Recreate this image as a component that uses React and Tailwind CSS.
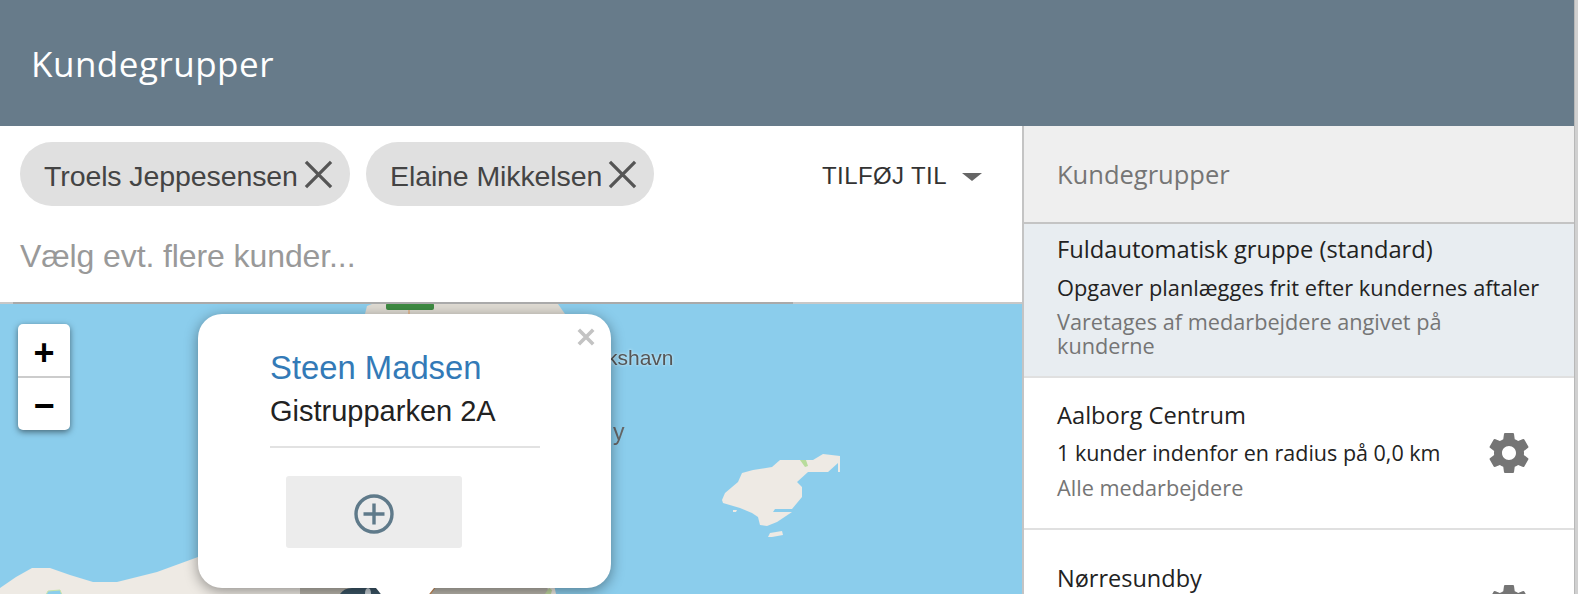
import React from "react";

function CloseX({ className }) {
  return (
    <svg viewBox="0 0 30 30" className={className} fill="none" stroke="#555555" strokeWidth="3.4">
      <path d="M2 2 L28 28 M28 2 L2 28" />
    </svg>
  );
}

function Chip({ name, className }) {
  return (
    <div className={"flex items-center h-16 rounded-[32px] bg-[#e0e0e0] pl-6 " + className}>
      <span className="text-[28.5px] leading-none text-[#444444] tracking-[-0.1px] whitespace-nowrap mt-[5px]">{name}</span>
      <CloseX className="w-[29px] h-[29px] ml-[6px]" />
    </div>
  );
}

function Gear({ className }) {
  return (
    <svg viewBox="0 0 24 24" className={className} fill="#757575">
      <path d="M19.43 12.98c.04-.32.07-.64.07-.98s-.03-.66-.07-.98l2.11-1.65c.19-.15.24-.42.12-.64l-2-3.46c-.12-.22-.39-.3-.61-.22l-2.49 1c-.52-.4-1.08-.73-1.69-.98l-.38-2.65C14.46 2.18 14.25 2 14 2h-4c-.25 0-.46.18-.49.42l-.38 2.65c-.61.25-1.17.59-1.69.98l-2.49-1c-.23-.09-.49 0-.61.22l-2 3.46c-.13.22-.07.49.12.64l2.11 1.65c-.04.32-.07.65-.07.98s.03.66.07.98l-2.11 1.65c-.19.15-.24.42-.12.64l2 3.46c.12.22.39.3.61.22l2.49-1c.52.4 1.08.73 1.69.98l.38 2.65c.03.24.24.42.49.42h4c.25 0 .46-.18.49-.42l.38-2.65c.61-.25 1.17-.59 1.69-.98l2.49 1c.23.09.49 0 .61-.22l2-3.46c.12-.22.07-.49-.12-.64l-2.11-1.65zM12 15.5c-1.93 0-3.5-1.57-3.5-3.5s1.57-3.5 3.5-3.5 3.5 1.57 3.5 3.5-1.57 3.5-3.5 3.5z" />
    </svg>
  );
}

function MapArt() {
  return (
    <svg viewBox="0 304 1022 290" className="absolute inset-0 w-full h-full">
      <defs>
        <filter id="soft"><feGaussianBlur stdDeviation="0.6" /></filter>
      </defs>
      <rect x="0" y="304" width="1022" height="290" fill="#8bcdec" />
      <g filter="url(#soft)">
        <path d="M0 588 L16 577 L32 568 L50 568 L70 575 L93 582 L117 582 L157 572 L198 557 L240 540 L300 540 L500 560 L552 575 L556 594 L0 594 Z" fill="#eeeae4" />
        <path d="M46 595 L48 591 L60 590 L62 595 Z" fill="#8bcdec" stroke="#c8e4a8" strokeWidth="1" />
        <path d="M300 560 H540 L548 590 L550 594 H300 Z" fill="#b9b5ac" />
        <path d="M365 314 L367 306 L372 304 H558 L565 314 Z" fill="#dfdbd3" />
        <rect x="386" y="303" width="48" height="7" rx="2" fill="#3c8a42" />
        <path d="M409 310 V314" stroke="#e8a060" strokeWidth="1" />
        <path d="M340 594 Q344 588 352 588 H376 Q384 590 386 594 Z" fill="#3b5566" />
        <path d="M365 594 Q365 588 368 588 Q371 588 371 594 Z" fill="#c9d2d8" />
        <path d="M427 594 L433 587 L436 587 L431 594 Z" fill="#c98a55" />
        <path d="M545 594 L549 588 L552 590 L551 594 Z" fill="#bfd8a0" />
        <path d="M722 500 L725 493 L738 482 L742 473 L753 470 L772 467 L780 460 L813 460 L823 454 L840 456 L840 472 L838 472 L838 463 L828 472 L808 472 L797 482 L802 487 L802 497 L792 509 L775 509 L773 512 L792 512 L777 522 L767 526 L760 525 L758 517 L752 513 L740 508 L723 503 Z" fill="#eeeae4" />
        <path d="M768 537 L770 533 L782 531 L783 535 L772 537 Z" fill="#eeeae4" />
        <path d="M733 510 L737 510 L736 512 L733 512 Z" fill="#eeeae4" />
        <path d="M800 460 L806 460 L808 466 L805 467 Z" fill="#b8dc9c" />
      </g>
    </svg>
  );
}

export default function App() {
  const sans = "font-['Liberation_Sans',Arial,sans-serif]";
  const side = "font-['Open_Sans',sans-serif]";
  return (
    <div className={"flex w-[1578px] h-[594px] overflow-hidden bg-white " + sans}>
      <div className="flex flex-col w-[1574px] h-full">
        <header className="flex items-center h-[126px] shrink-0 bg-[#677b8a] pl-[31px]">
          <h1 className={"text-[35px] leading-none text-white tracking-[0.5px] mt-px " + side}>Kundegrupper</h1>
        </header>

        <div className="flex flex-1 min-h-0">
          <div className="flex flex-col w-[1022px] shrink-0">
            <section className="relative flex flex-col h-[178px] shrink-0 pl-5 pt-4">
              <div className="flex gap-4">
                <Chip name="Troels Jeppesensen" className="w-[330px]" />
                <Chip name="Elaine Mikkelsen" className="w-[288px]" />
                <div className="flex items-center ml-[152px] text-[24px] tracking-[0.4px] text-[#333333] whitespace-nowrap">
                  <span className="mt-[3px]">TILFØJ TIL</span>
                  <span className="ml-[15px] mt-[6px] w-0 h-0 border-x-[10px] border-x-transparent border-t-[8px] border-t-[#666666]" />
                </div>
              </div>
              <div className="mt-[34px] text-[32px] leading-none text-[#999999] tracking-[-0.1px]">Vælg evt. flere kunder...</div>
              <div className="absolute left-0 right-0 bottom-0 h-[2px] bg-[#c8c8c8]">
                <div className="ml-[13px] w-[780px] h-full bg-[#aaaaaa]" />
              </div>
            </section>

            <section className="relative flex-1 overflow-hidden">
              <MapArt />
              <span className="absolute left-[607px] top-[43px] text-[21px] leading-none text-[#555555] blur-[0.7px] [text-shadow:0_0_3px_#e6f4fb]">kshavn</span>
              <span className="absolute left-[613px] top-[117px] text-[23px] leading-none text-[#666666] blur-[0.7px]">y</span>

              <div className="absolute left-[18px] top-5 w-[52px] h-[106px] flex flex-col rounded-[5px] bg-white shadow-[0_2px_6px_rgba(0,0,0,0.5)]">
                <div className="flex items-center justify-center h-[54px] pt-[5px] border-b-2 border-[#cccccc] text-[36px] font-bold leading-none text-black">+</div>
                <div className="flex items-center justify-center flex-1 pt-[3px] text-[36px] font-bold leading-none text-black">−</div>
              </div>

              <div className="absolute left-[198px] top-[10px] w-[413px] h-[274px] rounded-[24px] bg-white shadow-[0_3px_14px_rgba(0,0,0,0.4)] pl-[72px] pt-[36px]">
                <svg viewBox="0 0 20 20" className="absolute right-[16px] top-[14px] w-[18px] h-[18px]" fill="none" stroke="#c3c3c3" strokeWidth="4">
                  <path d="M2 2 L18 18 M18 2 L2 18" />
                </svg>
                <div className="text-[32.8px] leading-[36px] text-[#337ab7]">Steen Madsen</div>
                <div className="text-[29px] leading-[32px] text-[#222222] mt-[9px]">Gistrupparken 2A</div>
                <div className="w-[270px] h-[2px] bg-[#e2e2e2] mt-[19px]" />
                <div className="flex items-center justify-center ml-4 mt-[28px] w-[176px] h-[72px] rounded-[3px] bg-[#ececec]">
                  <svg viewBox="0 0 40 40" className="w-10 h-10 mt-[3px]" fill="none" stroke="#5f7a8a">
                    <circle cx="20" cy="20" r="18" strokeWidth="3.4" />
                    <path d="M20 9.5 V30.5 M9.5 20 H30.5" strokeWidth="3.4" />
                  </svg>
                </div>
              </div>
              <div className="absolute left-[376px] top-[284px] w-0 h-0 border-x-[29px] border-x-transparent border-t-[36px] border-t-white" />
            </section>
          </div>

          <aside className={"flex flex-col flex-1 min-w-0 border-l-2 border-[#c4c4c4] " + side}>
            <div className="flex items-center h-[98px] shrink-0 bg-[#efefef] border-b-2 border-[#c4c4c4] pl-[33px]">
              <span className="text-[25.5px] leading-none text-[#757575] mt-[2px]">Kundegrupper</span>
            </div>
            <div className="h-[154px] shrink-0 bg-[#e8edf1] border-b-2 border-[#e0e0e0] pl-[33px] pt-[10px]">
              <div className="text-[23.7px] leading-[30px] text-[#222222] whitespace-nowrap">Fuldautomatisk gruppe (standard)</div>
              <div className="text-[21.8px] leading-[30px] text-[#222222] mt-[9px] whitespace-nowrap">Opgaver planlægges frit efter kundernes aftaler</div>
              <div className="text-[21.7px] leading-[24px] text-[#757575] mt-[7px] w-[430px]">Varetages af medarbejdere angivet på kunderne</div>
            </div>
            <div className="flex items-center h-[152px] shrink-0 border-b-2 border-[#e0e0e0] pl-[33px] pr-[41px]">
              <div className="flex-1 min-w-0 -mt-1">
                <div className="text-[23.7px] leading-[30px] text-[#222222]">Aalborg Centrum</div>
                <div className="text-[21.5px] leading-[30px] text-[#222222] mt-2 whitespace-nowrap">1 kunder indenfor en radius på 0,0 km</div>
                <div className="text-[21.7px] leading-[30px] text-[#757575] mt-[5px]">Alle medarbejdere</div>
              </div>
              <Gear className="w-12 h-12 shrink-0" />
            </div>
            <div className="flex pl-[33px] pr-[41px] pt-[33px]">
              <div className="flex-1 text-[23.5px] leading-[30px] text-[#222222]">Nørresundby</div>
              <Gear className="w-12 h-12 shrink-0 mt-[18px]" />
            </div>
          </aside>
        </div>
      </div>
      <div className="w-1 h-full shrink-0 bg-[#d0d0d0] border-l border-[#b8b8b8]" />
    </div>
  );
}
